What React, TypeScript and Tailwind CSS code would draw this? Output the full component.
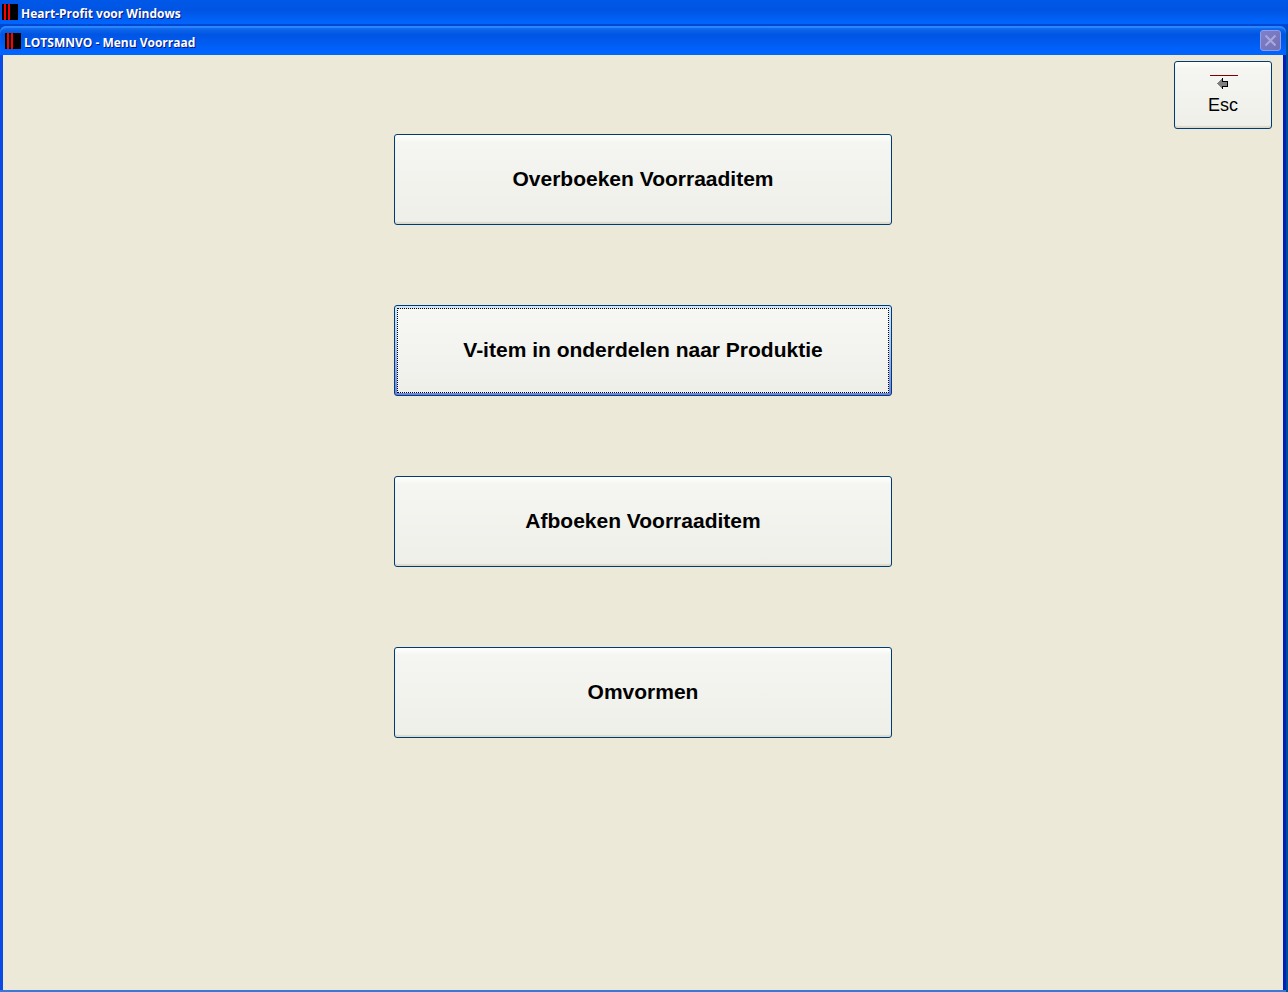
import type { ReactNode } from 'react';
import clsx from 'clsx';

interface MenuItem {
  label: string;
  focused?: boolean;
}

const menuItems: MenuItem[] = [
  { label: 'Overboeken Voorraaditem' },
  { label: 'V-item in onderdelen naar Produktie', focused: true },
  { label: 'Afboeken Voorraaditem' },
  { label: 'Omvormen' },
];

function AppIcon() {
  return (
    <svg width="16" height="16" viewBox="0 0 16 16" shapeRendering="crispEdges" aria-hidden="true">
      <rect width="16" height="16" fill="#000" />
      <path d="M2 0h2v16h-2zM6 0h2v16h-2z" fill="#f00" />
    </svg>
  );
}

function TitleText({ children }: { children: ReactNode }) {
  return (
    <h1 className="pt-1 font-['Open_Sans','Noto_Sans',sans-serif] text-[12px] leading-4 font-bold whitespace-nowrap text-white [text-shadow:1px_1px_0_#0a1883]">
      {children}
    </h1>
  );
}

function CloseButton() {
  return (
    <button
      type="button"
      aria-label="Sluiten"
      disabled
      className="flex size-[21px] items-center justify-center rounded-[3px] border border-[#8f9ce8] bg-linear-to-br from-[#7c80cc] to-[#7470b4]"
    >
      <svg width="13" height="13" viewBox="0 0 13 13" aria-hidden="true">
        <path d="M1.5 1.5l10 10M11.5 1.5l-10 10" stroke="#a9a9dd" strokeWidth="2" />
      </svg>
    </button>
  );
}

function EscButton() {
  return (
    <button
      type="button"
      className="flex h-[68px] w-[98px] flex-col items-center rounded-[3px] border border-[#003c74] bg-linear-to-b from-white via-[#f5f5f1] via-10% to-[#efefea] pt-[13px] text-[18px] leading-5 text-black shadow-[inset_0_-2px_1px_#dcd9cc]"
    >
      <svg width="30" height="14" viewBox="0 0 30 14" shapeRendering="crispEdges" aria-hidden="true">
        <rect x="2" width="28" height="1" fill="#800000" />
        <path d="M14 3h1v3h5v6h-5v2h-1v-1h-1v-1h-1v-1h-1v-1h-1v-1h4z" fill="#000" />
        <path d="M9 8h1v-1h1v-1h1v-1h1v-1h1v3h5v4h-5v2h-1v-1h-1v-1h-1v-1h-1v-1h-1z" fill="#808080" />
      </svg>
      <span className="mt-[6px]">Esc</span>
    </button>
  );
}

function MenuButton({ label, focused }: MenuItem) {
  return (
    <button
      type="button"
      className={clsx(
        'h-[91px] w-full rounded-[3px] border border-[#003c74] text-[21px] font-bold text-black',
        focused
          ? 'bg-linear-to-b from-[#cee7ff] via-[#a3c0f5] to-[#6982ee] p-[2px]'
          : 'bg-linear-to-b from-white via-[#f5f5f1] via-8% to-[#efefea] pb-[2px] shadow-[inset_0_-2px_1px_#dcd9cc]',
      )}
    >
      {focused ? (
        <span className="flex h-full items-center justify-center border border-dotted border-black bg-linear-to-b from-[#f7f7f4] to-[#efefea] pb-[2px]">
          {label}
        </span>
      ) : (
        label
      )}
    </button>
  );
}

export default function App() {
  return (
    <div className="flex min-h-screen flex-col bg-[#004e98] font-['Liberation_Sans',Arial,sans-serif]">
      <header className="flex h-[26px] items-center gap-[3px] bg-linear-to-b from-[#0058e8] from-0% via-[#0054e3] via-40% to-[#0066ff] to-90% pb-[2px] pl-[2px] shadow-[inset_0_-2px_1px_#0046d0]">
        <AppIcon />
        <TitleText>Heart-Profit voor Windows</TitleText>
      </header>

      {/* child window sits inside the frame of the main one */}
      <div className="flex flex-1 flex-col bg-linear-to-b from-[#0046d0] from-0% to-[#004e98] to-1% pr-[2px]">
        <section className="flex flex-1 flex-col rounded-t-[6px] border-b-2 border-[#3a78d8] bg-linear-to-r from-[#0a4be8] from-50% to-[#0020b8] to-50%">
          <div className="flex h-[29px] items-center gap-[3px] rounded-t-[6px] bg-linear-to-b from-[#1670f0] from-0% via-[#0054e3] via-30% to-[#0064ff] to-90% px-[5px] shadow-[inset_0_2px_1px_#2a88ff]">
            <AppIcon />
            <div className="flex-1">
              <TitleText>LOTSMNVO - Menu Voorraad</TitleText>
            </div>
            <CloseButton />
          </div>

          <main className="mx-[3px] flex flex-1 flex-col bg-[#ece9d8] pt-[6px] pb-10">
            <div className="flex justify-end pr-[11px]">
              <EscButton />
            </div>
            <nav className="mx-auto mt-[5px] flex w-full max-w-[498px] flex-col gap-20">
              {menuItems.map((item) => (
                <MenuButton key={item.label} {...item} />
              ))}
            </nav>
          </main>
        </section>
      </div>
    </div>
  );
}
